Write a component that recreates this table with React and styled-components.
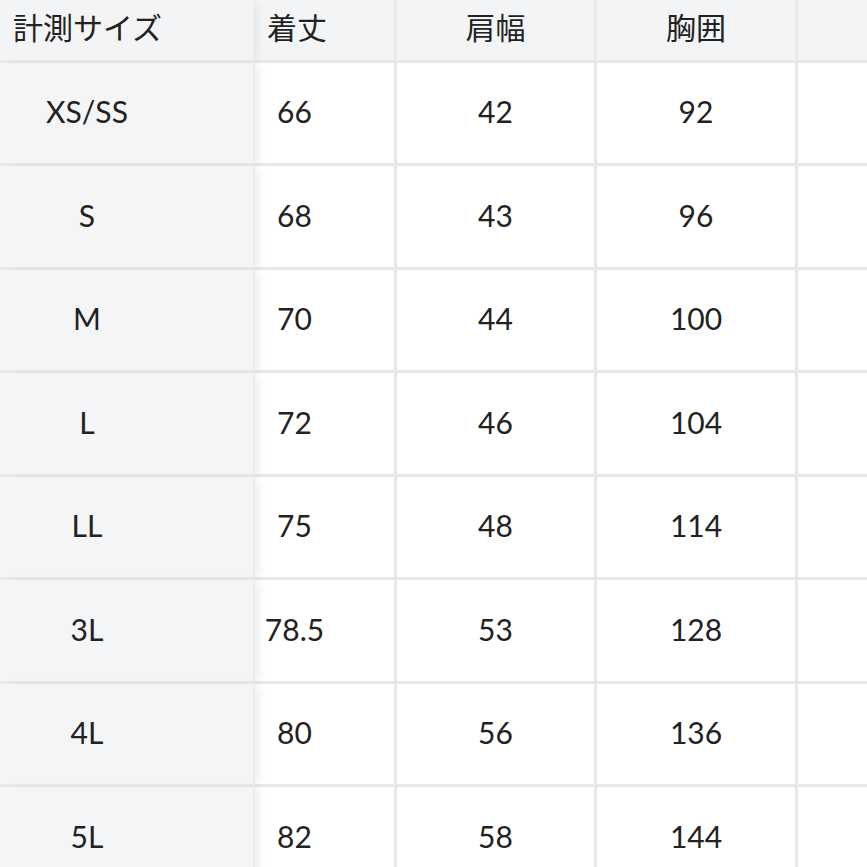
import React from "react";
import styled, { createGlobalStyle } from "styled-components";

const GlobalStyle = createGlobalStyle`
  html, body {
    margin: 0;
    padding: 0;
    background: #ffffff;
    overflow: hidden;
  }
  body {
    font-family: Lato, "Noto Sans CJK JP", sans-serif;
    color: #222;
  }
`;

const headers = ["計測サイズ", "着丈", "肩幅", "胸囲", ""];

const rows = [
  ["XS/SS", "66", "42", "92"],
  ["S", "68", "43", "96"],
  ["M", "70", "44", "100"],
  ["L", "72", "46", "104"],
  ["LL", "75", "48", "114"],
  ["3L", "78.5", "53", "128"],
  ["4L", "80", "56", "136"],
  ["5L", "82", "58", "144"],
];

export default function App() {
  return (
    <>
      <GlobalStyle />
      <Sheet>
        <HeadRow>
          {headers.map((h, i) => (
            <HeadCell key={i} $col={i}>
              {h}
            </HeadCell>
          ))}
        </HeadRow>
        {rows.map((r) => (
          <BodyRow key={r[0]}>
            <SizeCell>{r[0]}</SizeCell>
            <ValueCell $col={1}>{r[1]}</ValueCell>
            <ValueCell $col={2}>{r[2]}</ValueCell>
            <ValueCell $col={3}>{r[3]}</ValueCell>
            <ValueCell $col={4} />
          </BodyRow>
        ))}
      </Sheet>
    </>
  );
}

const columns = "255px 142px 200px 201px 200px";

const Sheet = styled.div`
  width: 867px;
  height: 867px;
  overflow: hidden;
`;

const HeadRow = styled.div`
  display: grid;
  grid-template-columns: ${columns};
  height: 62.5px;
`;

const BodyRow = styled.div`
  display: grid;
  grid-template-columns: ${columns};
  height: 103.5px;
`;

const Cell = styled.div`
  box-sizing: border-box;
  display: flex;
  align-items: center;
  border-bottom: 3px solid #e7e8ea;
  line-height: 1;
`;

const HeadCell = styled(Cell)`
  background: #f3f4f6;
  font-size: 30px;
  padding-bottom: 5px;
  justify-content: ${(p) => (p.$col <= 1 ? "flex-start" : "center")};
  padding-left: ${(p) => (p.$col === 0 ? "13px" : p.$col === 1 ? "12px" : "0")};
  border-right: ${(p) => (p.$col === 0 ? "2px solid #ebecee" : "3px solid #e8e9eb")};
  position: relative;
  z-index: ${(p) => (p.$col === 0 ? 2 : 1)};
  box-shadow: ${(p) => (p.$col === 0 ? "5px 0 8px -3px rgba(0,0,0,0.08)" : "none")};
`;

const SizeCell = styled(Cell)`
  background: #f4f5f7;
  font-size: 30px;
  justify-content: center;
  padding: 0 91px 3px 12px;
  border-right: 2px solid #ebecee;
  position: relative;
  z-index: 2;
  box-shadow: 6px 0 9px -3px rgba(0, 0, 0, 0.09);
`;

const ValueCell = styled(Cell)`
  background: #ffffff;
  font-size: 30px;
  justify-content: center;
  padding: ${(p) => (p.$col === 1 ? "0 72px 3px 12px" : "0 0 3px 0")};
  border-right: 3px solid #e8e8ea;
`;
